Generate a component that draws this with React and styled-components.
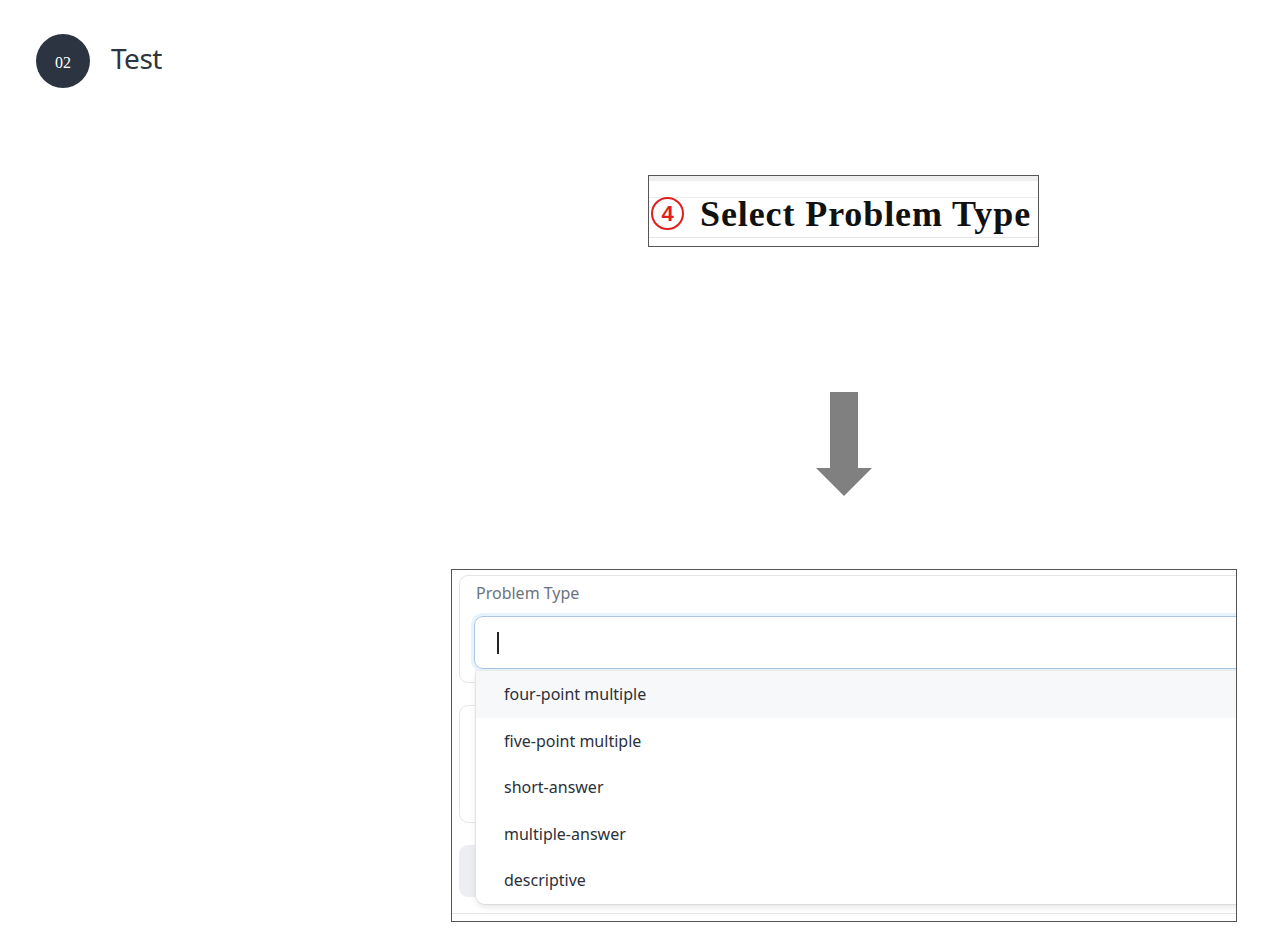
import React from 'react';
import styled, { createGlobalStyle } from 'styled-components';

const GlobalStyle = createGlobalStyle`
  body {
    margin: 0;
    background: #fff;
    font-family: 'Noto Sans', 'Open Sans', sans-serif;
  }
`;

const Page = styled.div`
  width: 1277px;
  min-height: 933px;
  padding-top: 34px;
  box-sizing: border-box;
`;

const Header = styled.div`
  display: flex;
  align-items: center;
  gap: 21px;
  padding-left: 36px;
`;

const StepBadge = styled.div`
  width: 54px;
  height: 54px;
  border-radius: 50%;
  background: #2c3341;
  color: #fff;
  display: flex;
  align-items: center;
  justify-content: center;
  font-family: 'Liberation Serif', serif;
  font-size: 16px;
  padding-top: 3px;
  box-sizing: border-box;
`;

const HeaderTitle = styled.h1`
  margin: 0;
  font-size: 28px;
  font-weight: 400;
  color: #2f3540;
  line-height: 1;
  margin-top: -6px;
  letter-spacing: -0.5px;
`;

const Column = styled.section`
  width: 786px;
  margin-left: 451px;
  display: flex;
  flex-direction: column;
  align-items: center;
`;

const TitleShot = styled.div`
  margin-top: 87px;
  align-self: flex-start;
  margin-left: 197px;
  width: 391px;
  height: 72px;
  box-sizing: border-box;
  border: 1px solid #555;
  display: flex;
  align-items: center;
  gap: 16px;
  padding-left: 2px;
  padding-top: 5px;
  background: linear-gradient(
    to bottom,
    #efefef 0px,
    #efefef 5px,
    #fff 5px,
    #fff 21px,
    #ececec 21px,
    #ececec 22px,
    #fff 22px,
    #fff 61px,
    #e6e6e6 61px,
    #e6e6e6 62px,
    #fff 62px
  );
`;

const CircledNum = styled.span`
  width: 29px;
  height: 29px;
  border: 2.5px solid #e01f1f;
  border-radius: 50%;
  color: #e01f1f;
  font-family: 'Liberation Sans', sans-serif;
  font-weight: 700;
  font-size: 22px;
  display: flex;
  align-items: center;
  justify-content: center;
  flex-shrink: 0;
`;

const TitleText = styled.span`
  font-family: 'Liberation Serif', serif;
  font-weight: 700;
  font-size: 36px;
  color: #111;
  letter-spacing: 0.9px;
  white-space: nowrap;
`;

const ArrowWrap = styled.div`
  margin-top: 145px;
  width: 56px;
  height: 104px;
`;

const ShotBox = styled.div`
  margin-top: 73px;
  width: 786px;
  height: 353px;
  box-sizing: border-box;
  border: 1px solid #555;
  overflow: hidden;
  align-self: stretch;
  padding: 5px 0 0 7px;
`;

const Stack = styled.div`
  width: 900px;
  display: flex;
  flex-direction: column;
  gap: 22px;
  position: relative;
`;

const Card = styled.div`
  border: 1px solid #e3e5e8;
  border-radius: 9px;
  padding: ${(p) => p.$pad || '6px 14px 13px'};
  height: ${(p) => p.$h || 'auto'};
  box-sizing: border-box;
  position: relative;
`;

const Label = styled.div`
  font-size: 16px;
  color: #6c7380;
  line-height: 22px;
  padding-left: 2px;
  margin-bottom: 12px;
`;

const Input = styled.div`
  height: 53px;
  box-sizing: border-box;
  border: 1px solid #a9c6e3;
  border-radius: 9px;
  box-shadow: 0 0 0 3px #e6f2fc;
  display: flex;
  align-items: center;
  padding-left: 22px;
`;

const Caret = styled.span`
  width: 2px;
  height: 22px;
  background: #222;
`;

const Menu = styled.ul`
  position: absolute;
  left: 16px;
  top: 95px;
  width: 900px;
  margin: 0;
  padding: 0;
  list-style: none;
  background: #fff;
  border-radius: 0 0 9px 9px;
  box-shadow: 0 3px 6px rgba(0, 0, 0, 0.1), 0 0 0 1px #eceef0;
  z-index: 2;
  overflow: hidden;
`;

const MenuItem = styled.li`
  height: 46.5px;
  display: flex;
  align-items: center;
  padding-left: 28px;
  font-size: 16px;
  color: #2a303b;
  background: ${(p) => (p.$active ? '#f7f8fa' : '#fff')};
`;

const GreyButton = styled.div`
  height: 52px;
  border-radius: 9px;
  background: #eceef1;
`;

const Rule = styled.div`
  height: 1px;
  background: #e4e6e8;
  margin-top: -6px;
  margin-left: -7px;
`;

const options = [
  'four-point multiple',
  'five-point multiple',
  'short-answer',
  'multiple-answer',
  'descriptive',
];

export default function App() {
  return (
    <>
      <GlobalStyle />
      <Page>
        <Header>
          <StepBadge>02</StepBadge>
          <HeaderTitle>Test</HeaderTitle>
        </Header>
        <Column>
          <TitleShot>
            <CircledNum>4</CircledNum>
            <TitleText>Select Problem Type</TitleText>
          </TitleShot>
          <ArrowWrap>
            <svg width="56" height="104" viewBox="0 0 56 104">
              <polygon
                points="14,0 42,0 42,76 56,76 28,104 0,76 14,76"
                fill="#808080"
              />
            </svg>
          </ArrowWrap>
          <ShotBox>
            <Stack>
              <Card>
                <Label>Problem Type</Label>
                <Input>
                  <Caret />
                </Input>
                <Menu>
                  {options.map((o, i) => (
                    <MenuItem key={o} $active={i === 0}>
                      {o}
                    </MenuItem>
                  ))}
                </Menu>
              </Card>
              <Card $h="118px" />
              <GreyButton />
              <Rule />
            </Stack>
          </ShotBox>
        </Column>
      </Page>
    </>
  );
}
